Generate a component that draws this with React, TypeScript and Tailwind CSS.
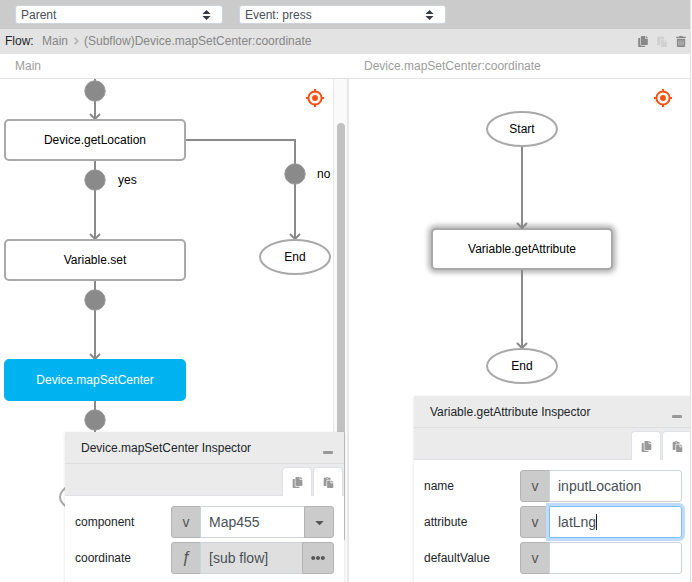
import React from "react";
import { FaCopy, FaPaste, FaTrashAlt, FaCaretDown, FaEllipsisH } from "react-icons/fa";

function Select({ label, width }: { label: string; width: string }) {
  return (
    <div className={`flex h-[19px] items-center justify-between rounded-[3px] border border-[#ced4da] bg-white pl-[5px] pr-[11px] text-[#495057] ${width}`}>
      <span>{label}</span>
      <svg width="9" height="10" viewBox="0 0 9 10" fill="#343a40">
        <path d="M4.5 0 8.6 4H.4zM4.5 10 .4 6h8.2z" />
      </svg>
    </div>
  );
}

function Target({ className }: { className: string }) {
  return (
    <svg width="20" height="20" viewBox="0 0 20 20" className={`absolute ${className}`} fill="none" stroke="#ff4e0d" strokeWidth="2">
      <circle cx="10" cy="10" r="6.6" />
      <path d="M10 1v3M10 16v3M1 10h3M16 10h3" />
      <circle cx="10" cy="10" r="2.9" fill="#ff4e0d" stroke="none" />
    </svg>
  );
}

function Box({ label, className }: { label: string; className: string }) {
  return (
    <div className={`absolute flex h-[42px] w-[182px] items-center justify-center rounded-[5px] border-2 pb-px ${className}`}>
      {label}
    </div>
  );
}

function Oval({ label, className }: { label: string; className: string }) {
  return (
    <div className={`absolute flex h-9 w-[72px] items-center justify-center rounded-[50%] border-2 border-[#a9a9a9] bg-white pb-px ${className}`}>
      {label}
    </div>
  );
}

function Edge({ d }: { d: string }) {
  return <path d={d} fill="none" stroke="#8a8a8a" strokeWidth="2" />;
}

function Joint({ x, y }: { x: number; y: number }) {
  return <circle cx={x} cy={y} r="10.2" fill="#8a8a8a" stroke="#999" strokeWidth="1" />;
}

function Tab({ children }: { children: React.ReactNode }) {
  return (
    <div className="flex h-[29px] w-[30px] shrink-0 items-center justify-center rounded-t-[4px] border border-b-0 border-[#dee2e6] bg-white text-[#999]">
      {children}
    </div>
  );
}

function Inspector({ title, className, children }: { title: string; className: string; children: React.ReactNode }) {
  return (
    <div className={`absolute bg-white shadow-[0_1px_3px_rgba(0,0,0,0.12)] ${className}`}>
      <div className="flex h-8 items-center justify-between border-b border-[#dcdee0] bg-[#ebebeb] pl-4 pr-[11px] text-[#212529]">
        <span>{title}</span>
        <span className="mt-[9px] h-[3px] w-[10px] rounded-[1px] bg-[#999]" />
      </div>
      <div className="flex h-8 justify-end gap-px border-b border-[#dee2e6] bg-[#ebebeb] pr-px pt-[3px]">
        <Tab><FaCopy size={11} /></Tab>
        <Tab><FaPaste size={11} /></Tab>
      </div>
      <div className="flex flex-col gap-1 pl-[10px] pt-[10px]">{children}</div>
    </div>
  );
}

function Row({ label, children }: { label: string; children: React.ReactNode }) {
  return (
    <div className="flex h-8 items-center text-[#212529]">
      <div className="w-24">{label}</div>
      {children}
    </div>
  );
}

function Prefix({ children }: { children: React.ReactNode }) {
  return (
    <div className="flex h-full w-[30px] shrink-0 items-center justify-center rounded-l-[3px] border border-[#b4b4b4] bg-[#cbcbcb] pb-px text-[14px] text-[#555]">
      {children}
    </div>
  );
}

const field = "-ml-px flex h-full items-center border border-[#ced4da] pb-px pl-2 text-[14px] text-[#495057]";
const suffix = "-ml-px flex h-full items-center justify-center rounded-r-[3px] border border-[#b4b4b4] bg-[#cbcbcb] text-[#555]";

export default function App() {
  return (
    <div className="flex h-[582px] w-[692px] overflow-hidden bg-white font-['Liberation_Sans',Arial,sans-serif] text-[12px] leading-[16px]">
      <div className="flex w-[691px] flex-col border-r border-[#e3e3e3]">
        <div className="flex h-[29px] shrink-0 gap-4 bg-[#cbcbcb] pl-[15px] pt-[5px]">
          <Select label="Parent" width="w-[208px]" />
          <Select label="Event: press" width="w-[207px]" />
        </div>
        <div className="flex h-[25px] shrink-0 items-center bg-[#e3e3e3] pb-px pl-[5px] pr-[4px] text-[#868686]">
          <span className="w-[37px] text-[#212529]">Flow:</span>
          <span>Main</span>
          <svg className="ml-[6px] mr-[5px]" width="5" height="8" viewBox="0 0 5 8" fill="none" stroke="#b5b5b5" strokeWidth="1.8">
            <path d="m.7.8 3 3.2-3 3.2" />
          </svg>
          <span>(Subflow)Device.mapSetCenter:coordinate</span>
          <span className="ml-auto flex items-center gap-[9px]">
            <FaCopy size={11} className="w-[10px] text-[#888]" />
            <FaPaste size={11} className="w-[10px] text-[#d0d0d0]" />
            <FaTrashAlt size={11} className="w-[10px] text-[#888]" />
          </span>
        </div>
        <div className="flex h-[25px] shrink-0 items-center border-b border-[#e3e3e3] text-[#9d9d9d]">
          <span className="w-[349px] pl-[15px]">Main</span>
          <span className="pl-[15px]">Device.mapSetCenter:coordinate</span>
        </div>
        <div className="flex min-h-0 flex-1">
          <div className="relative w-[349px] shrink-0 overflow-hidden text-black">
            <svg className="absolute inset-0" width="333" height="503" viewBox="0 79 333 503">
              <Edge d="M95 79V119M90 114l5 5 5-5" />
              <Edge d="M95 160V239M90 234l5 5 5-5" />
              <Edge d="M95 280V359M90 354l5 5 5-5" />
              <Edge d="M95 400V480" />
              <Edge d="M186 140H295V239M290 234l5 5 5-5" />
              <Joint x={95} y={91} />
              <Joint x={95} y={180} />
              <Joint x={95} y={300} />
              <Joint x={95} y={420} />
              <Joint x={295} y={174} />
            </svg>
            <Box label="Device.getLocation" className="left-1 top-[40px] border-[#a9a9a9] bg-white" />
            <Box label="Variable.set" className="left-1 top-[160px] border-[#a9a9a9] bg-white" />
            <Box label="Device.mapSetCenter" className="left-1 top-[280px] border-[#00b2f0] bg-[#00b2f0] text-white" />
            <Oval label="End" className="left-[259px] top-[160px]" />
            <Oval label="" className="left-[59px] top-[400px]" />
            <span className="absolute left-[118px] top-[93px]">yes</span>
            <span className="absolute left-[317px] top-[87px]">no</span>
            <Target className="left-[305px] top-[9px]" />
            <div className="absolute bottom-0 left-[333px] top-0 w-4 border-l border-r-2 border-[#e8e8e8] bg-[#fafafa]">
              <div className="ml-[3px] mt-11 h-[419px] w-2 rounded-full bg-[#c1c1c1]" />
            </div>
            <Inspector title="Device.mapSetCenter Inspector" className="left-[65px] top-[353px] h-[170px] w-[279px]">
              <Row label="component">
                <Prefix>v</Prefix>
                <div className={`${field} w-[105px] bg-white`}>Map455</div>
                <div className={`${suffix} w-[30px]`}><FaCaretDown size={13} /></div>
              </Row>
              <Row label="coordinate">
                <Prefix><span className="text-[16px] italic">ƒ</span></Prefix>
                <div className={`${field} w-[103px] bg-[#dfdfdf]`}>[sub flow]</div>
                <div className={`${suffix} w-8`}><FaEllipsisH size={14} /></div>
              </Row>
            </Inspector>
          </div>
          <div className="relative flex-1 overflow-hidden text-black">
            <Box label="Variable.getAttribute" className="left-[82px] top-[149px] border-[#a9a9a9] bg-white shadow-[0_0_5px_3px_rgba(0,0,0,0.28)]" />
            <svg className="absolute inset-0" width="341" height="503" viewBox="349 79 341 503">
              <Edge d="M522 146V228M517 223l5 5 5-5" />
              <Edge d="M522 270V348M517 343l5 5 5-5" />
            </svg>
            <Oval label="Start" className="left-[137px] top-8" />
            <Oval label="End" className="left-[137px] top-[269px]" />
            <Target className="left-[304px] top-[9px]" />
            <Inspector title="Variable.getAttribute Inspector" className="left-[65px] top-[317px] h-[190px] w-[279px]">
              <Row label="name">
                <Prefix>v</Prefix>
                <div className={`${field} w-[133px] rounded-r-[3px] bg-white`}>inputLocation</div>
              </Row>
              <Row label="attribute">
                <Prefix>v</Prefix>
                <div className="z-10 -ml-px flex h-full w-[133px] items-center rounded-r-[3px] border border-[#80bdff] bg-white pb-px pl-2 text-[14px] text-[#495057] shadow-[0_0_0_3px_#bfdcff]">
                  latLng<span className="h-4 w-px bg-[#222]" />
                </div>
              </Row>
              <Row label="defaultValue">
                <Prefix>v</Prefix>
                <div className={`${field} w-[133px] rounded-r-[3px] bg-white`} />
              </Row>
            </Inspector>
          </div>
        </div>
      </div>
    </div>
  );
}
